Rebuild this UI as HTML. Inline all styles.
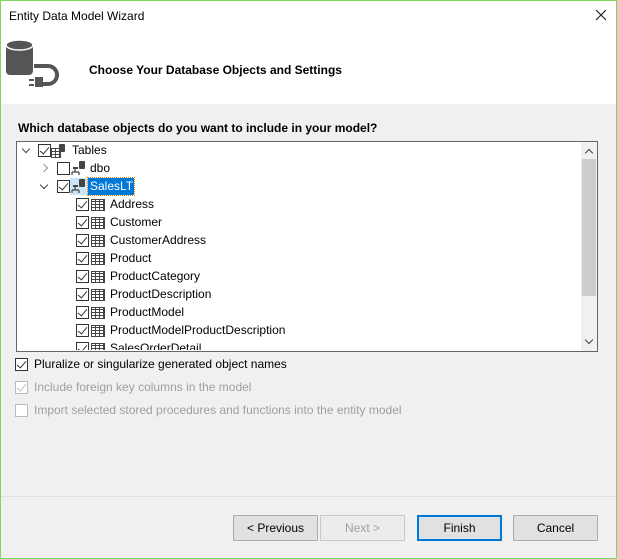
<!DOCTYPE html><html><head><style>
body{margin:0;width:617px;height:559px;overflow:hidden;font-family:"Liberation Sans",sans-serif;font-size:12px;color:#000}
.win{position:absolute;left:0;top:0;width:615px;height:557px;border:1px solid #7ed957;background:#f0f0f0}
.hdr{position:absolute;left:0;top:0;width:615px;height:103px;background:#fff}
.t{position:absolute;white-space:nowrap}
.cb{position:absolute;width:11px;height:11px;border:1px solid #333;background:#fff}
.cb.c::after{content:"";position:absolute;left:3px;top:0px;width:4px;height:8px;border:solid #333;border-width:0 1.3px 1.3px 0;transform:rotate(40deg)}
.cb.g{border-color:#bbb}.cb.g::after{border-color:#bbb}
.tree{position:absolute;left:15px;top:140px;width:580px;height:209px;border:1px solid #666;background:#fff;overflow:hidden}
.ti{position:absolute;width:12px;height:10px;border:1px solid #444;background:repeating-linear-gradient(90deg,transparent 0 3px,#444 3px 4px),repeating-linear-gradient(0deg,transparent 0 2px,#444 2px 3px)}
.btn{position:absolute;top:514px;height:24px;width:83px;border:1px solid #adadad;background:#e1e1e1;text-align:center;line-height:24px}
.chev{position:absolute;width:5px;height:5px;border:solid #444;border-width:0 1.5px 1.5px 0}
</style></head><body><div class="win">
<div class="hdr"></div>
<div class="t" style="left:8px;top:8px">Entity Data Model Wizard</div>
<svg class="t" style="left:594px;top:8px" width="12" height="12"><path d="M1 1L11 11M11 1L1 11" stroke="#222" stroke-width="1.2"/></svg>
<svg class="t" style="left:3px;top:37px" width="62" height="50"><rect x="2" y="4" width="27" height="33" rx="4" fill="#555"/><ellipse cx="15.5" cy="7" rx="13.5" ry="5" fill="#555" stroke="#fff" stroke-width="1.5"/><path d="M30 28h14a9 9 0 0 1 0 18h-8" stroke="#555" stroke-width="4" fill="none"/><rect x="31" y="39" width="8" height="10" fill="#555"/><rect x="25" y="41" width="5" height="2" fill="#555"/><rect x="25" y="46" width="5" height="2" fill="#555"/></svg>
<div class="t" style="left:88px;top:62px;font-weight:bold">Choose Your Database Objects and Settings</div>
<div class="t" style="left:17px;top:120px;font-weight:bold">Which database objects do you want to include in your model?</div>
<div class="tree">
<div style="position:absolute;left:564px;top:0;width:16px;height:209px;background:#f0f0f0"></div>
<div style="position:absolute;left:565px;top:17px;width:14px;height:137px;background:#cdcdcd"></div>
<div class="chev" style="left:569px;top:8px;transform:rotate(-135deg)"></div>
<div class="chev" style="left:569px;top:195px;transform:rotate(45deg)"></div>
</div>
<div class="chev" style="left:22px;top:145px;transform:rotate(45deg)"></div>
<div class="cb c" style="left:37px;top:143px"></div><div class="ti" style="left:50px;top:147px;width:8px;height:8px"></div>
<svg class="t" style="left:57px;top:143px" width="8" height="8"><rect x="1" y="0" width="6" height="8" rx="1" fill="#444"/></svg>
<div class="t" style="left:71px;top:142px">Tables</div>
<div class="chev" style="left:40px;top:164px;transform:rotate(-45deg);border-color:#999"></div>
<div class="cb" style="left:56px;top:161px"></div>
<svg class="t" style="left:70px;top:160px" width="16" height="15"><rect x="8" y="0" width="6" height="8" rx="1" fill="#444"/><path d="M4 7v4M1 11h7M1 11v3M8 11v3" stroke="#444" stroke-width="1.2" fill="none"/><rect x="2" y="6" width="5" height="2" fill="#444"/></svg>
<div class="t" style="left:89px;top:160px">dbo</div>
<div class="chev" style="left:40px;top:181px;transform:rotate(45deg)"></div>
<div class="cb c" style="left:56px;top:179px"></div>
<div style="position:absolute;left:69px;top:177px;width:18px;height:17px;background:#cce4f7"></div>
<svg class="t" style="left:70px;top:178px" width="16" height="15"><rect x="8" y="0" width="6" height="8" rx="1" fill="#444"/><path d="M4 7v4M1 11h7M1 11v3M8 11v3" stroke="#444" stroke-width="1.2" fill="none"/><rect x="2" y="6" width="5" height="2" fill="#444"/></svg>
<div class="t" style="left:87px;top:177px;width:44px;height:17px;background:#0078d7;outline:1px dotted #e08000;color:#fff;line-height:17px;padding-left:2px">SalesLT</div>
<div class="cb c" style="left:75px;top:197px"></div><div class="ti" style="left:90px;top:198px"></div><div class="t" style="left:109px;top:196px">Address</div>
<div class="cb c" style="left:75px;top:215px"></div><div class="ti" style="left:90px;top:216px"></div><div class="t" style="left:109px;top:214px">Customer</div>
<div class="cb c" style="left:75px;top:233px"></div><div class="ti" style="left:90px;top:234px"></div><div class="t" style="left:109px;top:232px">CustomerAddress</div>
<div class="cb c" style="left:75px;top:251px"></div><div class="ti" style="left:90px;top:252px"></div><div class="t" style="left:109px;top:250px">Product</div>
<div class="cb c" style="left:75px;top:269px"></div><div class="ti" style="left:90px;top:270px"></div><div class="t" style="left:109px;top:268px">ProductCategory</div>
<div class="cb c" style="left:75px;top:287px"></div><div class="ti" style="left:90px;top:288px"></div><div class="t" style="left:109px;top:286px">ProductDescription</div>
<div class="cb c" style="left:75px;top:305px"></div><div class="ti" style="left:90px;top:306px"></div><div class="t" style="left:109px;top:304px">ProductModel</div>
<div class="cb c" style="left:75px;top:323px"></div><div class="ti" style="left:90px;top:324px"></div><div class="t" style="left:109px;top:322px">ProductModelProductDescription</div>
<div style="position:absolute;left:69px;top:339px;width:300px;height:10px;overflow:hidden"><div class="cb c" style="left:6px;top:2px"></div><div class="ti" style="left:21px;top:3px"></div><div class="t" style="left:40px;top:1px">SalesOrderDetail</div></div>
<div class="cb c" style="left:14px;top:357px"></div><div class="t" style="left:33px;top:356px">Pluralize or singularize generated object names</div>
<div class="cb c g" style="left:14px;top:380px"></div><div class="t" style="left:33px;top:379px;color:#a0a0a0">Include foreign key columns in the model</div>
<div class="cb g" style="left:14px;top:403px"></div><div class="t" style="left:33px;top:402px;color:#a0a0a0">Import selected stored procedures and functions into the entity model</div>
<div style="position:absolute;left:0;top:495px;width:615px;height:1px;background:#dfdfdf"></div>
<div class="btn" style="left:232px">&lt; Previous</div>
<div class="btn" style="left:319px;color:#a0a0a0;border-color:#c8c8c8;background:#ececec">Next &gt;</div>
<div class="btn" style="left:416px;border:2px solid #0078d7;height:22px;width:81px;line-height:22px">Finish</div>
<div class="btn" style="left:512px">Cancel</div>
</div></body></html>
